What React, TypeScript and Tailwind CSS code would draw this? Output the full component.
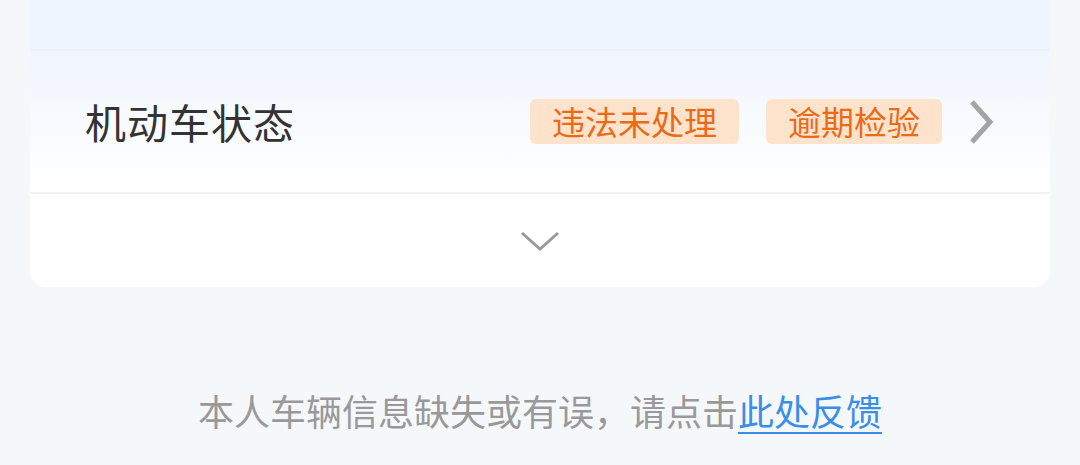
export default function App() {
  return (
    <div
      className="w-[1080px] h-[465px] bg-[#f5f8fa] overflow-hidden px-[30px]"
      style={{ fontFamily: '"Noto Sans CJK SC", "Noto Sans", sans-serif' }}
    >
      <div className="bg-white rounded-b-[16px] overflow-hidden">
        <div className="h-[51px] bg-[#eef5fe] border-b-2 border-[#edf1f5]" />
        <div className="h-[143px] flex items-center pl-[55px] pr-[54px] bg-gradient-to-b from-[#f0f6fe] to-white border-b-2 border-[#f0f2f4]">
          <span className="text-[41px] leading-none text-[#333333] tracking-[1px]">机动车状态</span>
          <div className="ml-auto flex items-center">
            <span className="h-[45px] px-[22px] rounded-[6px] bg-[#fde2cc] text-[#e96b16] text-[33px] leading-[45px]">违法未处理</span>
            <span className="ml-[27px] h-[45px] px-[22px] rounded-[6px] bg-[#fde2cc] text-[#e96b16] text-[33px] leading-[45px]">逾期检验</span>
            <svg className="ml-[26px]" width="28" height="46" viewBox="0 0 28 46" fill="none">
              <path d="M4 3 L22 23 L4 43" stroke="#a3a3a3" strokeWidth="5" />
            </svg>
          </div>
        </div>
        <div className="h-[93px] flex items-center justify-center">
          <svg width="40" height="22" viewBox="0 0 40 22" fill="none">
            <path d="M2 3 L20 19 L38 3" stroke="#9a9a9a" strokeWidth="3" />
          </svg>
        </div>
      </div>
      <div className="mt-[105px] text-center text-[36px] leading-none text-[#999999]">
        本人车辆信息缺失或有误，请点击<span className="text-[#3b8ee8] underline underline-offset-[6px] decoration-2">此处反馈</span>
      </div>
    </div>
  )
}
